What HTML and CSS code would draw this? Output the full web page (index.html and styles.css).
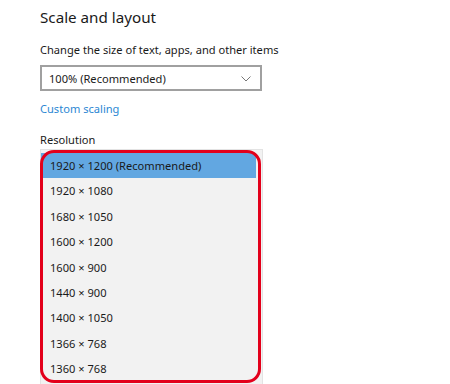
FILE: index.html
```html
<!DOCTYPE html>
<html>
<head>
<meta charset="utf-8">
<link rel="stylesheet" href="styles.css">
</head>
<body>
<div class="page">
  <h2 class="title">Scale and layout</h2>
  <div class="label">Change the size of text, apps, and other items</div>
  <div class="select">
    <span>100% (Recommended)</span>
    <svg class="chev" width="10" height="6" viewBox="0 0 10 6"><path d="M0.5 0.5 L5 5 L9.5 0.5" fill="none" stroke="#777" stroke-width="1"/></svg>
  </div>
  <a class="link">Custom scaling</a>
  <div class="label res">Resolution</div>
  <div class="listwrap">
    <ul class="list">
      <li class="sel">1920 × 1200 (Recommended)</li>
      <li>1920 × 1080</li>
      <li>1680 × 1050</li>
      <li>1600 × 1200</li>
      <li>1600 × 900</li>
      <li>1440 × 900</li>
      <li>1400 × 1050</li>
      <li>1366 × 768</li>
      <li>1360 × 768</li>
    </ul>
    <div class="mark"></div>
  </div>
</div>
</body>
</html>
```
FILE: styles.css
```css
html, body {
  margin: 0;
  padding: 0;
  background: #fff;
  overflow: hidden;
}
.page {
  padding: 0 0 0 40px;
  font-family: "Noto Sans", "Open Sans", sans-serif;
  color: #111;
  width: 410px;
  height: 384px;
}
.title {
  margin: 0;
  padding-top: 4px;
  font-size: 15.2px;
  font-weight: 400;
  line-height: 26px;
  color: #1a1a1a;
}
.label {
  margin-top: 12px;
  font-size: 11.1px;
  line-height: 16px;
  color: #1a1a1a;
}
.select {
  margin-top: 7px;
  height: 22px;
  border: 2px solid #a0a0a0;
  display: flex;
  align-items: center;
  justify-content: space-between;
  padding: 0 9px 0 7px;
  box-sizing: content-box;
  width: 202px;
  font-size: 11.1px;
  color: #1a1a1a;
}
.chev { margin-top: 1px; }
.link {
  display: block;
  margin-top: 10px;
  font-size: 11.1px;
  line-height: 16px;
  color: #2b87d3;
}
.res {
  margin-top: 15px;
}
.listwrap {
  position: relative;
  margin-top: 1px;
  width: 223px;
}
.list {
  list-style: none;
  margin: 0;
  padding: 3px 0 0 0;
  background: #f2f2f2;
  border: 1px solid #e3e3e3;
  border-bottom: none;
  height: 243px;
}
.list li {
  height: 25.4px;
  line-height: 25.4px;
  padding-left: 9px;
  font-size: 11.1px;
  color: #1a1a1a;
  white-space: nowrap;
}
.list li.sel {
  background: #62a7e1;
  margin-right: 6px;
}
.mark {
  position: absolute;
  left: 0px;
  top: 1px;
  width: 221px;
  height: 233px;
  box-sizing: border-box;
  border: 3.5px solid #e3001b;
  border-radius: 14px;
}
```
